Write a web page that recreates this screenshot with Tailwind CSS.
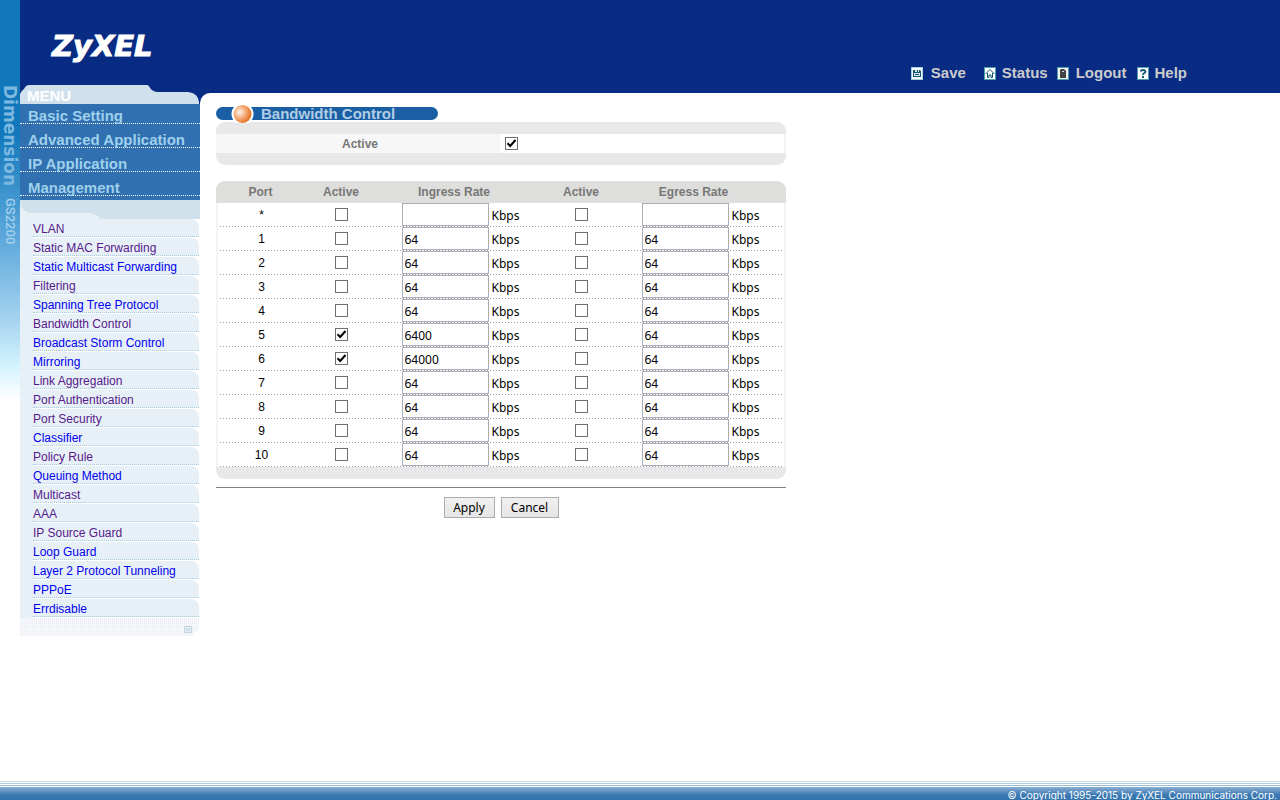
<!DOCTYPE html>
<html lang="en">
<head>
  <meta charset="UTF-8">
  <meta name="viewport" content="width=device-width, initial-scale=1.0">
  <title>Bandwidth Control</title>
  <script src="https://cdn.jsdelivr.net/npm/@tailwindcss/browser@4"></script>
  <style>
    /* Black tick on a white box */
    .tick:checked {
      background-image: url("data:image/svg+xml,%3Csvg xmlns='http://www.w3.org/2000/svg' viewBox='0 0 11 11'%3E%3Cpath d='M1.5 5.2L4.2 8L9.5 2' fill='none' stroke='%23000' stroke-width='2'/%3E%3C/svg%3E");
    }
    /* Fine white mesh at the foot of the menu */
    .mesh {
      background-color: #eef2f7;
      background-image: conic-gradient(#fff 25%, transparent 0);
      background-size: 2px 2px;
    }
    /* Dotted rule under a table row */
    .dots {
      background: repeating-linear-gradient(90deg, transparent 0 1px, #9a97b5 1px 2px, transparent 2px 3px) left bottom / 100% 1px no-repeat;
    }
  </style>
</head>
<body class="flex min-h-screen flex-col bg-white font-['Liberation_Sans',Arial,sans-serif] text-xs text-black">

  <div class="flex flex-1">

    <!-- Product strip -->
    <div class="flex h-[400px] w-5 shrink-0 flex-col items-center self-start bg-linear-[180deg,#1077ba_0px,#1077ba_130px,#5fa9dc_240px,#a5d3ef_320px,#d2f3ff_365px,#ffffff_400px] pt-[85px]">
      <span class="font-['DejaVu_Sans',sans-serif] text-[17px] leading-5 font-bold text-[#7db8e0] [writing-mode:vertical-rl]">Dimension</span>
      <span class="mt-3 font-[Roboto,sans-serif] text-[13px] leading-5 font-medium text-[#a3d0ee] [writing-mode:vertical-rl]">GS2200</span>
    </div>

    <!-- Sidebar -->
    <aside class="flex w-[180px] shrink-0 flex-col">
      <div class="h-[85px] bg-[#082b84] pt-[30px] pl-8">
        <a href="#" class="block font-['DejaVu_Sans',sans-serif] text-[29px] leading-8 font-bold text-white italic [-webkit-text-stroke:1px_white]">ZyXEL</a>
      </div>

      <div class="relative h-[19px] bg-[#082b84]">
        <svg class="absolute inset-0" width="180" height="19" viewBox="0 0 180 19"><path d="M0 19V9Q1 6 4 4Q6 0 9 0H127Q129 0 130 3Q133 7 138 7H168Q178 8 179 17V19Z" fill="#d0e1ed"/></svg>
        <h2 class="relative pl-[7px] text-[15px] leading-[22px] font-bold text-white">MENU</h2>
      </div>

      <nav class="flex flex-col gap-1 bg-[#3070b0] pb-1 text-[15px] leading-6 font-bold text-[#9fd0ec]">
        <a href="#" class="h-5 border-b border-dotted border-white pl-2">Basic Setting</a>
        <a href="#" class="h-5 border-b border-dotted border-white pl-2">Advanced Application</a>
        <a href="#" class="h-5 border-b border-dotted border-white pl-2">IP Application</a>
        <a href="#" class="h-5 border-b border-dotted border-white pl-2">Management</a>
      </nav>

      <svg class="block bg-[#d0e1ec]" width="180" height="19" viewBox="0 0 180 19"><path d="M0 19V3Q1 9 7 12Q9 13 13 13H70Q76 14 81 19Z" fill="#e8f0f7"/></svg>

      <nav id="submenu" class="mr-px flex flex-col bg-[#e8f0f7] pl-[13px]"></nav>

      <div class="mesh mr-px flex h-[18px] items-center justify-end pt-1 pr-[7px] [clip-path:polygon(0_0,100%_0,100%_11px,calc(100%-7px)_100%,0_100%)]">
        <svg width="8" height="7" viewBox="0 0 8 7"><path d="M.5 .5h7v6h-7zM2 2l4 3M6 2L2 5" fill="#e6eef5" stroke="#c3d2df"/></svg>
      </div>
    </aside>

    <!-- Right side -->
    <div class="flex min-w-0 flex-1 flex-col">
      <header class="flex h-[93px] items-end justify-end bg-[#082b84] pr-[93px] pb-[9px] text-[15px] leading-[22px] font-bold text-[#cccccc]">
        <a href="#" class="mr-[18px] flex items-center gap-2">
          <svg width="12" height="13" viewBox="0 0 12 13"><path d="M0 0h12v13H0z" fill="#9fd0dc"/><path d="M1 1h10v11H1z" fill="#fff"/><path d="M2 3h7l1 1v6H2z" fill="#12586f"/><path d="M4 3h4v2H4zM3 6h6v3H3z" fill="#d5e8ee"/><path d="M6 3h1v2H6zM4 7h4v1H4z" fill="#12586f"/></svg>
          Save
        </a>
        <a href="#" class="mr-[9px] flex items-center gap-[6px]">
          <svg width="12" height="13" viewBox="0 0 12 13"><path d="M0 0h12v13H0z" fill="#4d9fb0"/><path d="M1 1h10v11H1z" fill="#fff"/><path d="M1.500 7L6 2.500L10.500 7M3.500 6v4.500h1.500V8h2v2.500h1.500V6" fill="none" stroke="#12586f"/></svg>
          Status
        </a>
        <a href="#" class="mr-[11px] flex items-center gap-[7px]">
          <svg width="12" height="13" viewBox="0 0 12 13"><path d="M0 0h12v13H0z" fill="#4d9fb0"/><path d="M1 1h10v11H1z" fill="#f3f3ee"/><path d="M3 3l1-1h3l2 2v7H3z" fill="#444"/><path d="M5 4h2v1H5z" fill="#ddd"/></svg>
          Logout
        </a>
        <a href="#" class="flex items-center gap-[5px]">
          <svg width="12" height="13" viewBox="0 0 12 13"><path d="M0 0h12v13H0z" fill="#4d9fb0"/><path d="M1 1h10v11H1z" fill="#fff"/><path d="M3.500 4.500Q4 3 6 3T8.500 4.500Q8.500 5.500 7 6.200Q6 6.800 6 8" fill="none" stroke="#12586f" stroke-width="1.800"/><path d="M5 9h2v2H5z" fill="#12586f"/></svg>
          Help
        </a>
      </header>

      <div class="bg-linear-[180deg,#082b84_20px,#ffffff_20px]">
        <main class="rounded-tl-[10px] bg-white px-4 pt-[14px]">
          <form class="w-full max-w-[570px]">

            <!-- Title pill -->
            <div class="flex h-[13px] w-[222px] items-center rounded-full bg-[#1a5fa3] pl-[15px]">
              <svg class="mr-[7px] shrink-0" width="23" height="18" viewBox="0 0 23 18">
                <defs>
                  <radialGradient id="orb" cx="0.35" cy="0.4" r="0.7">
                    <stop offset="0" stop-color="#fff4ea"/>
                    <stop offset="0.5" stop-color="#f3a976"/>
                    <stop offset="1" stop-color="#e0660f"/>
                  </radialGradient>
                </defs>
                <circle cx="11.500" cy="9" r="11" fill="#fff"/>
                <circle cx="11.500" cy="9" r="9" fill="url(#orb)"/>
              </svg>
              <h1 class="text-[15px] leading-4 font-bold whitespace-nowrap text-[#b0cde6]">Bandwidth Control</h1>
            </div>

            <div class="mt-[2px] overflow-hidden rounded-[9px] bg-[#e8e8e8] py-3">
              <div class="flex h-[19px] border-r-2 border-[#f3f3f3] bg-white">
                <label for="active" class="w-1/2 bg-[#f7f7f7] pl-1 text-center leading-5 font-bold text-[#777777]">Active</label>
                <div class="flex items-center pl-[5px]">
                  <input type="checkbox" id="active" checked class="tick size-[13px] appearance-none border border-[#707070] bg-white">
                </div>
              </div>
            </div>

            <div class="mt-4 overflow-hidden rounded-[9px] bg-[#e8e8e8] pb-3">
              <table class="w-full table-fixed border-separate border-spacing-0 bg-white text-center">
                <colgroup>
                  <col class="w-[85px]">
                  <col class="w-[80px]">
                  <col class="w-[160px]">
                  <col class="w-[80px]">
                  <col>
                </colgroup>
                <thead>
                  <tr class="h-[22px] bg-[#dededc] text-[#777777]">
                    <th class="pl-1">Port</th>
                    <th>Active</th>
                    <th class="pr-[14px]">Ingress Rate</th>
                    <th>Active</th>
                    <th class="pr-5">Egress Rate</th>
                  </tr>
                </thead>
                <tbody id="ports"></tbody>
              </table>
            </div>

            <div class="mt-2 flex justify-center gap-[6px] border-t border-[#808080] pt-[9px] font-['Noto_Sans',sans-serif]">
              <button type="button" class="h-[21px] w-[51px] border border-[#acacac] bg-linear-to-b from-[#f0f0f0] to-[#e5e5e5] leading-5">Apply</button>
              <button type="reset" class="h-[21px] w-[58px] border border-[#acacac] bg-linear-to-b from-[#f0f0f0] to-[#e5e5e5] leading-5">Cancel</button>
            </div>
          </form>
        </main>
      </div>
    </div>
  </div>

  <footer>
    <div class="h-px bg-[#cbdde9]"></div>
    <div class="mt-px h-px bg-[#b4cfe0]"></div>
    <div class="mt-px h-px bg-[#9cbfd8]"></div>
    <p class="mt-px h-[13px] bg-linear-[180deg,#8aafd3_0px,#3a78b2_8px,#3575ae_13px] pr-[3px] text-right font-[Inter,sans-serif] text-[10px] leading-4 text-white">© Copyright 1995-2015 by ZyXEL Communications Corp.</p>
  </footer>

  <script>
    const pages = [
      ['VLAN', true], ['Static MAC Forwarding', true], ['Static Multicast Forwarding', false],
      ['Filtering', true], ['Spanning Tree Protocol', false], ['Bandwidth Control', true],
      ['Broadcast Storm Control', false], ['Mirroring', false], ['Link Aggregation', true],
      ['Port Authentication', true], ['Port Security', true], ['Classifier', false],
      ['Policy Rule', true], ['Queuing Method', false], ['Multicast', true], ['AAA', true],
      ['IP Source Guard', true], ['Loop Guard', false], ['Layer 2 Protocol Tunneling', false],
      ['PPPoE', false], ['Errdisable', false]
    ];

    document.getElementById('submenu').innerHTML = pages.map(([name, visited]) => `
      <div class="h-[19px] bg-white pb-px">
        <a href="#" class="block h-[18px] rounded-tr-[8px] border-b border-dotted border-b-[#a9cbe0] bg-[#e8f0f7] leading-5 whitespace-nowrap ${visited ? 'text-[#551a8b]' : 'text-[#0000ee]'}">${name}</a>
      </div>`).join('');

    // port, ingress active, ingress rate, egress rate
    const ports = [
      ['*', false, '', ''],
      ['1', false, '64', '64'],
      ['2', false, '64', '64'],
      ['3', false, '64', '64'],
      ['4', false, '64', '64'],
      ['5', true, '6400', '64'],
      ['6', true, '64000', '64'],
      ['7', false, '64', '64'],
      ['8', false, '64', '64'],
      ['9', false, '64', '64'],
      ['10', false, '64', '64']
    ];

    const checkbox = (label, checked) => `
      <input type="checkbox" aria-label="${label}" ${checked ? 'checked' : ''} class="tick mx-auto block size-[13px] appearance-none border border-[#707070] bg-white">`;

    const rate = (label, value) => `
      <label class="flex h-[23px] items-center justify-center gap-[3px] font-['Noto_Sans',sans-serif]">
        <input type="text" aria-label="${label}" value="${value}" class="h-[23px] w-[87px] border border-[#abadb3] bg-white px-[2px] pt-[2px]">
        <span class="w-[29px] pt-[2px] text-left">Kbps</span>
      </label>`;

    document.getElementById('ports').innerHTML = ports.map(([port, on, ingress, egress]) => `
      <tr class="dots h-6">
        <td class="border-l-2 border-[#f3f3f3] p-0 pb-px pl-1">${port}</td>
        <td class="p-0 pb-px">${checkbox('Ingress active, port ' + port, on)}</td>
        <td class="p-0 pb-px">${rate('Ingress rate, port ' + port, ingress)}</td>
        <td class="p-0 pb-px">${checkbox('Egress active, port ' + port, false)}</td>
        <td class="border-r-2 border-[#f3f3f3] p-0 pr-[3px] pb-px">${rate('Egress rate, port ' + port, egress)}</td>
      </tr>`).join('');
  </script>
</body>
</html>
